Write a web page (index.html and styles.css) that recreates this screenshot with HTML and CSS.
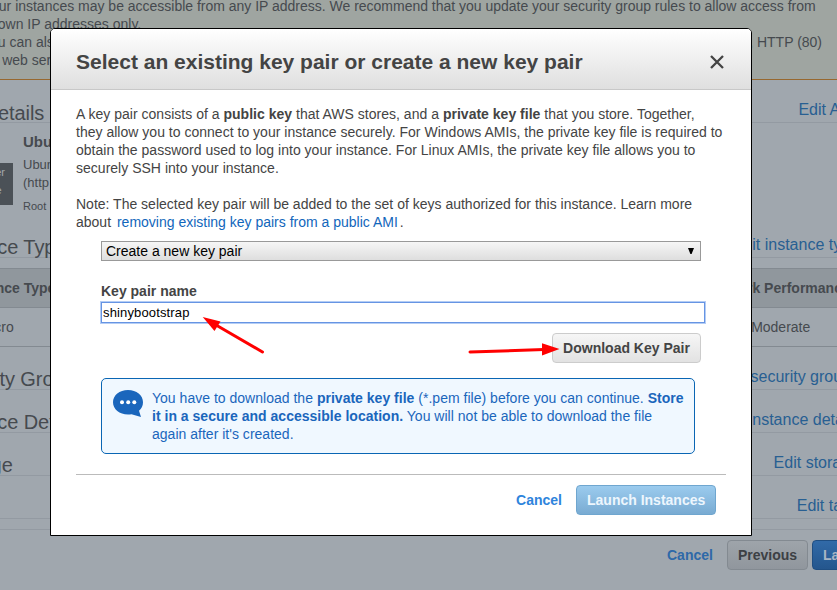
FILE: index.html
```html
<!DOCTYPE html>
<html lang="en">
<head>
<meta charset="utf-8">
<title>Select an existing key pair or create a new key pair</title>
<link rel="stylesheet" href="styles.css">
</head>
<body>
<main class="page">
  <div class="banner">
    <p class="lead">Your instances may be accessible from any IP address. We recommend that you update your security group rules to allow access from</p>
    <p>known IP addresses only.</p>
    <p class="ports">You can also open additional ports in your security group to facilitate access to the application or service you're running, e.g., HTTP (80)</p>
    <p class="ports">for web servers.</p>
  </div>
  <section class="review">
    <header class="row first"><h2>AMI Details</h2><a>Edit AMI</a></header>
    <div class="ami">
      <div class="tier">Free tier<br>eligible</div>
      <div class="ami-text">
        <h3>Ubuntu</h3>
        <p>Ubuntu</p>
        <p>(http</p>
        <small>Root</small>
      </div>
    </div>
    <header class="row type"><h2>Instance Type</h2><a>Edit instance type</a></header>
    <div class="table">
      <div class="tr th"><span>Instance Type</span><span>Network Performance</span></div>
      <div class="tr"><span>t2.micro</span><span>Low to Moderate</span></div>
    </div>
    <header class="row"><h2>Security Groups</h2><a>Edit security groups</a></header>
    <header class="row"><h2>Instance Details</h2><a>Edit instance details</a></header>
    <header class="row"><h2>Storage</h2><a>Edit storage</a></header>
    <header class="row"><h2></h2><a>Edit tags</a></header>
  </section>
  <footer class="page-footer">
    <a>Cancel</a>
    <button class="btn dim">Previous</button>
    <button class="btn dim-primary">Launch</button>
  </footer>
</main>

<div class="modal">
  <header class="modal-header">
    <h1>Select an existing key pair or create a new key pair</h1>
    <svg class="close" viewBox="0 0 14 14"><path d="M1 1L13 13M13 1L1 13"/></svg>
  </header>
  <div class="modal-body">
    <p>A key pair consists of a <b>public key</b> that AWS stores, and a <b>private key file</b> that you store. Together,<br>they allow you to connect to your instance securely. For Windows AMIs, the private key file is required to<br>obtain the password used to log into your instance. For Linux AMIs, the private key file allows you to<br>securely SSH into your instance.</p>
    <p class="note">Note: The selected key pair will be added to the set of keys authorized for this instance. Learn more<br>about <a class="doc">removing existing key pairs from a public AMI</a>.</p>
    <div class="form">
      <div class="select"><span>Create a new key pair</span><svg viewBox="0 0 6 6"><path d="M0 0H6L3.6 6H2.4Z"/></svg></div>
      <label>Key pair name</label>
      <div class="input">shinybootstrap</div>
      <button class="btn download">Download Key Pair</button>
      <div class="info">
        <svg viewBox="0 0 30 27"><path d="M15 0C23.5 0 30 5.2 30 12.2C30 15.6 28.600 18.600 26 20.800L28 27L18.500 24.200C17.500 24.400 16.200 24.500 15 24.500C6.500 24.500 0 19.300 0 12.300C0 5.200 6.500 0 15 0Z"/><g><circle cx="9" cy="12.300" r="2"/><circle cx="15.200" cy="12.300" r="2"/><circle cx="21.300" cy="12.300" r="2"/></g></svg>
        <p>You have to download the <b>private key file</b> (*.pem file) before you can continue. <b>Store<br>it in a secure and accessible location.</b> You will not be able to download the file<br>again after it's created.</p>
      </div>
    </div>
    <footer class="modal-footer">
      <a>Cancel</a>
      <button class="btn launch">Launch Instances</button>
    </footer>
  </div>
</div>

<svg class="arrows" viewBox="0 0 837 590">
  <path class="shaft" d="M262.500 352L216 325M470 352L544 349.500"/>
  <path class="head" d="M202.700 317L220.500 321.500L214.500 331Z"/>
  <path class="head" d="M559.500 349L542 343.300V355.500Z"/>
</svg>
</body>
</html>
```
FILE: styles.css
```css
* { box-sizing: border-box; }
body, h1, h2, h3, p { margin: 0; }
body {
  width: 837px;
  height: 590px;
  overflow: hidden;
  background: #a0a7ae;
  color: #444;
  font: 14px/18px "Liberation Sans", Arial, sans-serif;
}

.page {
  height: 590px;
  overflow: hidden;
  color: #464a4f;
  white-space: nowrap;
}
.banner {
  height: 83px;
  margin-top: -3px;
  background: #9fa5a1;
  border-bottom: 1px solid #97682f;
}
.banner p { margin-left: -17px; }
.banner .lead { letter-spacing: -0.010px; }
.banner .ports { margin-left: -18px; }

.review { margin: 0 -22px 0 -57px; border-bottom: 1px solid #939aa2; height: 450px; }
.row {
  display: flex;
  justify-content: space-between;
  align-items: flex-end;
  height: 43px;
  border-bottom: 1px solid #939aa2;
}
.row h2 { font-size: 20px; line-height: 20px; font-weight: normal; letter-spacing: -0.05px; }
.row a { color: #285f92; font-size: 16px; line-height: 24px; }
.row.first h2 { line-height: 18px; letter-spacing: -0.1px; }
.row.first a { margin-right: 1px; }
.ami { display: flex; gap: 10px; height: 101px; padding-left: 13px; }
.tier {
  width: 57px;
  height: 42px;
  margin-top: 40px;
  background: #4b5157;
  color: #a3a8ad;
  font-size: 11px;
  text-align: center;
}
.ami-text { padding-top: 10px; }
.ami-text h3 { font-size: 15px; line-height: 18px; margin-bottom: 5px; }
.ami-text p { font-size: 13px; }
.ami-text small { display: block; font-size: 11px; line-height: 18px; margin-top: 5px; }
.row.type { height: 34px; }
.table { margin-top: 10px; border-top: 1px solid #838a91; }
.tr {
  display: grid;
  grid-template-columns: 742px 1fr;
  height: 39px;
  padding-left: 21px;
  line-height: 38px;
  border-bottom: 1px solid #838a91;
}
.tr.th { padding-left: 20px; background: #90979d; font-weight: bold; }

.page-footer { display: flex; align-items: center; margin: 10px 0 0 667px; width: 240px; }
.page-footer a { color: #2e69a8; font-weight: bold; margin-right: 14px; }
.btn {
  flex: none;
  height: 30px;
  padding: 0 10px;
  border: 1px solid #ccc;
  border-radius: 4px;
  font: bold 14px/28px "Liberation Sans", Arial, sans-serif;
}
.btn.dim { width: 81px; margin-right: 4px; color: #3c4044; border-color: #838a91; background: linear-gradient(#9ea4aa, #90969d); }
.btn.dim-primary { width: 110px; text-align: left; color: #a8b5c4; border-color: #1f4e82; background: linear-gradient(#316aa8, #24568d); }

.modal {
  position: absolute;
  left: 50px;
  top: 28px;
  width: 702px;
  height: 508px;
  background: #fff;
  border: 1px solid #000;
  border-radius: 5px 5px 0 0;
  white-space: nowrap;
}
.modal-header {
  display: flex;
  align-items: center;
  justify-content: space-between;
  height: 61px;
  padding: 5px 27px 0 25px;
  background: linear-gradient(#fff, #dfdfdf);
  border-bottom: 1px solid #c8c8c8;
  border-radius: 4px 4px 0 0;
}
.modal-header h1 { font-size: 21px; line-height: 26px; }
.close { width: 14px; height: 14px; margin-top: 1px; fill: none; stroke: #444; stroke-width: 2.300; }
.modal-body { padding: 15px 25px 0; }
.modal-body p { letter-spacing: 0.015px; }
.modal-body > p { margin-bottom: 18px; }
.modal-body .note { letter-spacing: 0; }
.doc { color: #1166bb; margin: 0 2px; }
.form { display: flex; flex-direction: column; width: 604px; margin: -8px 0 0 25px; }
.select {
  display: flex;
  align-items: center;
  justify-content: space-between;
  width: 600px;
  height: 20px;
  padding: 0 6px 0 4px;
  border: 1px solid #999;
  background: linear-gradient(#f6f6f6, #dedede);
  color: #000;
}
.select svg { width: 6px; height: 6px; }
.form label { margin-top: 21px; font-weight: bold; }
.input {
  height: 21px;
  margin-top: 2px;
  padding-left: 1px;
  border: 1px solid #6694e3;
  box-shadow: 0 0 0 1px #b4cdf5;
  color: #000;
  font-size: 13px;
  line-height: 19px;
  letter-spacing: 0.14px;
}
.download { width: 149px; margin: 10px 0 0 451px; color: #444; background: linear-gradient(#f6f6f6, #e2e2e2); }
.info {
  display: flex;
  gap: 9px;
  width: 594px;
  height: 76px;
  margin-top: 15px;
  padding: 10px 11px;
  border: 1px solid #0a66b4;
  border-radius: 5px;
  background: #f0f8ff;
  color: #1a66bc;
}
.info svg { flex: none; width: 30px; height: 27px; margin-top: 1px; fill: #1a66bc; }
.info g { fill: #fff; }
.modal-footer {
  display: flex;
  justify-content: flex-end;
  align-items: center;
  margin-top: 20px;
  padding: 10px 10px 0 0;
  border-top: 1px solid #bbb;
}
.modal-footer a { margin-right: 14px; color: #2e84dc; font-weight: bold; }
.launch { width: 140px; color: #edf6fd; border-color: #6fa6cf; background: linear-gradient(#9bcbee, #79abd2); }
.arrows { position: absolute; left: 0; top: 0; width: 837px; height: 590px; pointer-events: none; }
.shaft { stroke: #f00; stroke-width: 3; stroke-linecap: round; }
.head { fill: #f00; }
```
